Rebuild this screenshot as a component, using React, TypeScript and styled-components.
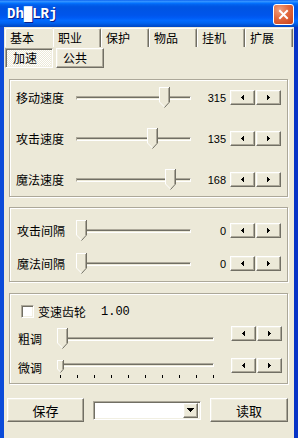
import React from 'react';
import styled, { createGlobalStyle, css } from 'styled-components';

const face = '#ECE9D8';
const shadow = '#ACA899';
const darkShadow = '#716F64';
const light = '#F1EFE2';

const GlobalStyle = createGlobalStyle`
  html, body {
    margin: 0;
    padding: 0;
    background: ${face};
  }
`;

const raised = css`
  box-sizing: border-box;
  border: 1px solid;
  border-color: #fff ${darkShadow} ${darkShadow} #fff;
  box-shadow: inset -1px -1px 0 ${shadow}, inset 1px 1px 0 ${light};
  background: ${face};
`;

const sunken = css`
  box-sizing: border-box;
  border: 1px solid;
  border-color: ${shadow} #fff #fff ${shadow};
  box-shadow: inset 1px 1px 0 ${darkShadow}, inset -1px -1px 0 ${light};
`;

const Window = styled.div`
  width: 298px;
  height: 438px;
  display: flex;
  flex-direction: column;
  overflow: hidden;
  font-family: "Noto Sans CJK SC", "Noto Sans", sans-serif;
  font-size: 12px;
  color: #000;
`;

const TitleBar = styled.div`
  height: 27px;
  flex: none;
  display: flex;
  align-items: center;
  justify-content: space-between;
  padding: 1px 4px 0 7px;
  box-sizing: border-box;
  background: linear-gradient(
    to bottom,
    #0058ee 0%,
    #3a93ff 4%,
    #288eff 7%,
    #127dff 10%,
    #036ffc 13%,
    #0262ee 17%,
    #0057e5 24%,
    #0054e3 30%,
    #0055eb 56%,
    #005bf5 66%,
    #026afe 76%,
    #0062ef 86%,
    #0052d6 93%,
    #0046c4 100%
  );
`;

const Title = styled.span`
  font-family: "Liberation Mono", "DejaVu Sans Mono", monospace;
  font-weight: bold;
  font-size: 14px;
  color: #fff;
  text-shadow: 1px 1px 0 #0a1e8a;
`;

const CloseButton = styled.div`
  width: 21px;
  height: 21px;
  box-sizing: border-box;
  border: 1px solid #fff;
  border-radius: 3px;
  display: flex;
  align-items: center;
  justify-content: center;
  background: radial-gradient(circle at 30% 25%, #f0a080 0%, #e2693e 45%, #c8401a 100%);
`;

const Body = styled.div`
  flex: 1;
  display: flex;
  flex-direction: column;
  background: ${face};
  border-left: 4px solid #0b4bd9;
  border-right: 4px solid #0734c6;
`;

const TabRow = styled.div`
  display: flex;
  height: 19px;
  margin: 1px 1px 0 1px;
`;

const Tab = styled.div<{ $active?: boolean }>`
  width: 48px;
  box-sizing: border-box;
  display: flex;
  align-items: center;
  padding-left: 4px;
  border-top: 1px solid #fff;
  border-left: 1px solid #fff;
  border-right: ${(p) => (p.$active ? 'none' : `1px solid ${darkShadow}`)};
  box-shadow: ${(p) => (p.$active ? 'none' : `inset -1px 0 0 ${shadow}`)};
  border-radius: 2px 2px 0 0;
  font-size: 12px;
  line-height: 1;
`;

const SubTabRow = styled.div`
  display: flex;
  gap: 3px;
  height: 20px;
  margin: 1px 0 0 1px;
`;

const SubTab = styled.div<{ $pressed?: boolean }>`
  width: 48px;
  height: 20px;
  display: flex;
  align-items: center;
  padding-left: ${(p) => (p.$pressed ? 7 : 6)}px;
  line-height: 1;
  ${(p) =>
    p.$pressed
      ? css`
          ${sunken};
          background: repeating-conic-gradient(#fff 0 25%, ${face} 0 50%) 0 0 / 2px 2px;
        `
      : raised};
`;

const Page = styled.div`
  display: flex;
  flex-direction: column;
  padding: 0 6px 0 5px;
`;

const Group = styled.div<{ $mt: number; $pt: number; $pb: number }>`
  margin-top: ${(p) => p.$mt}px;
  padding: ${(p) => p.$pt}px 0 ${(p) => p.$pb}px 6px;
  border: 1px solid ${shadow};
  box-shadow: inset 1px 1px 0 #fff, 1px 1px 0 #fff;
  display: flex;
  flex-direction: column;
`;

const Row = styled.div<{ $h: number; $mt?: number }>`
  display: flex;
  align-items: center;
  height: ${(p) => p.$h}px;
  margin-top: ${(p) => p.$mt ?? 0}px;
`;

const Label = styled.span<{ $w: number; $indent?: number }>`
  flex: none;
  width: ${(p) => p.$w}px;
  padding-left: ${(p) => p.$indent ?? 0}px;
  box-sizing: border-box;
  white-space: nowrap;
  line-height: 1;
`;

const SliderBox = styled.div<{ $w: number; $h: number }>`
  position: relative;
  flex: none;
  width: ${(p) => p.$w}px;
  height: ${(p) => p.$h}px;
  display: flex;
  flex-direction: column;
`;

const TrackArea = styled.div<{ $h: number }>`
  height: ${(p) => p.$h}px;
  display: flex;
  align-items: center;
`;

const Track = styled.div<{ $from: number }>`
  flex: 1;
  margin-left: ${(p) => p.$from}px;
  height: 4px;
  box-sizing: border-box;
  border-top: 1px solid ${shadow};
  border-left: 1px solid ${shadow};
  border-bottom: 1px solid #fff;
  border-right: 1px solid #fff;
  box-shadow: inset 0 1px 0 ${darkShadow};
  background: ${face};
`;

const ThumbWrap = styled.div<{ $left: number; $top: number }>`
  position: absolute;
  left: ${(p) => p.$left}px;
  top: ${(p) => p.$top}px;
  line-height: 0;
`;

const Ticks = styled.div`
  display: flex;
  justify-content: space-between;
  padding-left: 3px;
  margin-top: 3px;
`;

const Tick = styled.span`
  width: 1px;
  height: 3px;
  background: #000;
`;

const Value = styled.span`
  flex: none;
  width: 35px;
  text-align: right;
  font-family: "Liberation Sans", Arial, sans-serif;
  font-size: 11px;
  line-height: 1;
  padding-top: 2px;
`;

const StepGroup = styled.div<{ $ml: number; $top?: number }>`
  display: flex;
  gap: 1px;
  margin-left: ${(p) => p.$ml}px;
  ${(p) =>
    p.$top !== undefined &&
    css`
      align-self: flex-start;
      margin-top: ${p.$top}px;
    `}
`;

const StepButton = styled.div`
  ${raised};
  width: 25px;
  height: 15px;
  display: flex;
  align-items: center;
  justify-content: center;
`;

const CheckBox = styled.div`
  ${sunken};
  width: 13px;
  height: 13px;
  background: #fff;
  flex: none;
  margin-left: 5px;
`;

const CheckLabel = styled.span`
  margin-left: 4px;
  line-height: 1;
`;

const Ratio = styled.span`
  margin-left: 15px;
  font-family: "Liberation Mono", "DejaVu Sans Mono", monospace;
  font-size: 12px;
  line-height: 1;
`;

const Footer = styled.div`
  display: flex;
  align-items: center;
  margin-top: 14px;
  padding-left: 3px;
`;

const FooterButton = styled.div<{ $w: number; $ml?: number }>`
  ${raised};
  width: ${(p) => p.$w}px;
  height: 24px;
  margin-left: ${(p) => p.$ml ?? 0}px;
  display: flex;
  align-items: center;
  justify-content: center;
  font-size: 13px;
`;

const Combo = styled.div`
  ${sunken};
  width: 108px;
  height: 19px;
  margin-left: 9px;
  background: #fff;
  display: flex;
  align-items: center;
  justify-content: flex-end;
  padding-right: 2px;
`;

const ComboArrow = styled.div`
  ${raised};
  width: 15px;
  height: 15px;
  display: flex;
  align-items: center;
  justify-content: center;
`;

const ArrowLeft = () => (
  <svg width="3" height="5" shapeRendering="crispEdges">
    <rect x="2" y="0" width="1" height="5" fill="#000" />
    <rect x="1" y="1" width="1" height="3" fill="#000" />
    <rect x="0" y="2" width="1" height="1" fill="#000" />
  </svg>
);

const ArrowRight = () => (
  <svg width="3" height="5" shapeRendering="crispEdges">
    <rect x="0" y="0" width="1" height="5" fill="#000" />
    <rect x="1" y="1" width="1" height="3" fill="#000" />
    <rect x="2" y="2" width="1" height="1" fill="#000" />
  </svg>
);

const ArrowDown = () => (
  <svg width="7" height="4" shapeRendering="crispEdges">
    <rect x="0" y="0" width="7" height="1" fill="#000" />
    <rect x="1" y="1" width="5" height="1" fill="#000" />
    <rect x="2" y="2" width="3" height="1" fill="#000" />
    <rect x="3" y="3" width="1" height="1" fill="#000" />
  </svg>
);

const CloseX = () => (
  <svg width="11" height="11" viewBox="0 0 11 11">
    <path d="M2 2 L9 9 M9 2 L2 9" stroke="#fff" strokeWidth="2" strokeLinecap="square" />
  </svg>
);

const Thumb = ({ small }: { small?: boolean }) => {
  const w = small ? 7 : 11;
  const h = small ? 13 : 21;
  const body = small ? 9 : 15;
  const mid = (w - 1) / 2;
  return (
    <svg width={w} height={h} shapeRendering="crispEdges">
      <polygon points={`0.5,0.5 ${w - 0.5},0.5 ${w - 0.5},${body} ${mid + 0.5},${h - 0.5} 0.5,${body}`} fill={face} stroke="none" />
      <polyline points={`0.5,${body} 0.5,0.5 ${w - 1.5},0.5`} fill="none" stroke="#fff" />
      <polyline points={`0.5,${body} ${mid + 0.5},${h - 1}`} fill="none" stroke="#fff" shapeRendering="auto" />
      <polyline points={`${w - 0.5},0 ${w - 0.5},${body} ${mid + 0.5},${h - 0.5}`} fill="none" stroke={darkShadow} shapeRendering="auto" />
      <polyline points={`${w - 1.5},1 ${w - 1.5},${body - 0.5}`} fill="none" stroke={shadow} />
    </svg>
  );
};

type SliderProps = { width: number; thumb: number; from?: number; small?: boolean; ticks?: number };

const Slider = ({ width, thumb, from = 0, small, ticks }: SliderProps) => (
  <SliderBox $w={width} $h={small ? 20 : 21}>
    <TrackArea $h={small ? 14 : 21}>
      <Track $from={from} />
    </TrackArea>
    {ticks ? (
      <Ticks>
        {Array.from({ length: ticks }).map((_, i) => (
          <Tick key={i} />
        ))}
      </Ticks>
    ) : null}
    <ThumbWrap $left={thumb} $top={small ? 2 : 0}>
      <Thumb small={small} />
    </ThumbWrap>
  </SliderBox>
);

const Steps = ({ ml, top }: { ml: number; top?: number }) => (
  <StepGroup $ml={ml} $top={top}>
    <StepButton>
      <ArrowLeft />
    </StepButton>
    <StepButton>
      <ArrowRight />
    </StepButton>
  </StepGroup>
);

const tabs = ['基本', '职业', '保护', '物品', '挂机', '扩展'];

const speedRows = [
  { label: '移动速度', value: 315, thumb: 83 },
  { label: '攻击速度', value: 135, thumb: 71 },
  { label: '魔法速度', value: 168, thumb: 89 },
];

const intervalRows = [
  { label: '攻击间隔', value: 0 },
  { label: '魔法间隔', value: 0 },
];

export default function App() {
  return (
    <>
      <GlobalStyle />
      <Window>
        <TitleBar>
          <Title>Dh█LRj</Title>
          <CloseButton>
            <CloseX />
          </CloseButton>
        </TitleBar>
        <Body>
          <TabRow>
            {tabs.map((t, i) => (
              <Tab key={t} $active={i === 0}>
                {t}
              </Tab>
            ))}
          </TabRow>
          <SubTabRow>
            <SubTab $pressed>加速</SubTab>
            <SubTab>公共</SubTab>
          </SubTabRow>
          <Page>
            <Group $mt={11} $pt={7} $pb={6}>
              {speedRows.map((r, i) => (
                <Row key={r.label} $h={21} $mt={i ? 20 : 0}>
                  <Label $w={60}>{r.label}</Label>
                  <Slider width={115} thumb={r.thumb} />
                  <Value>{r.value}</Value>
                  <Steps ml={4} />
                </Row>
              ))}
            </Group>
            <Group $mt={10} $pt={12} $pb={7}>
              {intervalRows.map((r, i) => (
                <Row key={r.label} $h={21} $mt={i ? 12 : 0}>
                  <Label $w={60} $indent={1}>
                    {r.label}
                  </Label>
                  <Slider width={115} thumb={0} />
                  <Value>{r.value}</Value>
                  <Steps ml={4} />
                </Row>
              ))}
            </Group>
            <Group $mt={11} $pt={11} $pb={5}>
              <Row $h={13}>
                <CheckBox />
                <CheckLabel>变速齿轮</CheckLabel>
                <Ratio>1.00</Ratio>
              </Row>
              <Row $h={21} $mt={10}>
                <Label $w={41} $indent={2}>
                  粗调
                </Label>
                <Slider width={157} thumb={0} />
                <Steps ml={17} top={-2} />
              </Row>
              <Row $h={20} $mt={9}>
                <Label $w={41} $indent={2}>
                  微调
                </Label>
                <Slider width={157} thumb={0} from={3} small ticks={10} />
                <Steps ml={17} top={0} />
              </Row>
            </Group>
          </Page>
          <Footer>
            <FooterButton $w={77}>保存</FooterButton>
            <Combo>
              <ComboArrow>
                <ArrowDown />
              </ComboArrow>
            </Combo>
            <FooterButton $w={78} $ml={9}>
              读取
            </FooterButton>
          </Footer>
        </Body>
      </Window>
    </>
  );
}
